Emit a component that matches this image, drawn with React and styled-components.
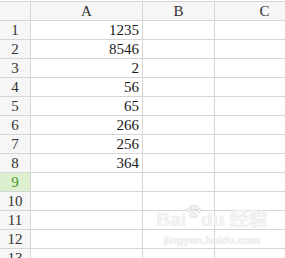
import styled, { createGlobalStyle } from 'styled-components'

const GlobalStyle = createGlobalStyle`
    html, body {
        margin: 0;
        padding: 0;
        background: #fff;
    }
    body {
        font-family: "Liberation Serif", "Noto Sans CJK SC", serif;
        overflow: hidden;
    }
`

const rows = [1235, 8546, 2, 56, 65, 266, 256, 364, null, null, null, null, null]
const columns = ['A', 'B', 'C']

const Sheet = styled.div`
    position: relative;
    width: 285px;
    height: 258px;
    overflow: hidden;
    padding-top: 1px;
    box-sizing: border-box;
`

const Grid = styled.div`
    display: grid;
    grid-template-columns: 31px 112px 72px 100px;
    grid-auto-rows: 19px;
    grid-template-rows: 20px;
`

const Cell = styled.div`
    box-sizing: border-box;
    border-right: 1px solid #d5d5d5;
    border-bottom: 1px solid #d5d5d5;
    font-size: 15px;
    line-height: 18px;
    color: #1a1a1a;
    padding: 0 3px 0 0;
    text-align: right;
    white-space: nowrap;
`

const HeadCell = styled(Cell)`
    border-top: 1px solid #d5d5d5;
    background: #f6f6f6;
    text-align: center;
    padding: 0;
    color: #333;
`

const RowHead = styled(Cell)`
    background: ${p => (p.$active ? '#dcefcf' : '#f6f6f6')};
    color: ${p => (p.$active ? '#3f9a1e' : '#333')};
    text-align: center;
    padding: 0;
`

const Watermark = styled.div`
    position: absolute;
    left: 163px;
    top: 204px;
    width: 98px;
    display: flex;
    flex-direction: column;
    align-items: center;
    color: #f2f2f2;
    font-family: "Liberation Sans", "Noto Sans CJK SC", sans-serif;
    font-weight: bold;
    white-space: nowrap;
    text-shadow: 0 0 1px #d8d8d8;
    pointer-events: none;
`

const Brand = styled.div`
    display: flex;
    align-items: flex-end;
    font-size: 19px;
    line-height: 22px;
`

const Site = styled.div`
    font-size: 11px;
    line-height: 12px;
    margin-top: 3px;
`

function Paw() {
    return (
        <svg width="15" height="27" viewBox="0 0 14 24" fill="#f2f2f2" stroke="#d8d8d8" strokeWidth="0.7">
            <ellipse cx="3" cy="5" rx="1.8" ry="2.2" />
            <ellipse cx="6" cy="2.6" rx="1.8" ry="2.2" />
            <ellipse cx="9.5" cy="2.6" rx="1.8" ry="2.2" />
            <ellipse cx="12" cy="5.5" rx="1.6" ry="2" />
            <path d="M3.5 10.5c0-2 1.8-3.2 3.5-3.2s3.5 1.2 3.5 3.2c0 1.2-1.6 1.6-3.5 1.2-1.9.4-3.5 0-3.5-1.2z" />
        </svg>
    )
}

export default function App() {
    return (
        <>
            <GlobalStyle />
            <Sheet>
                <Grid>
                    <HeadCell />
                    {columns.map(c => (
                        <HeadCell key={c}>{c}</HeadCell>
                    ))}
                    {rows.map((value, i) => (
                        <Row key={i} index={i + 1} value={value} />
                    ))}
                </Grid>
                <Watermark>
                    <Brand>
                        <span>Bai</span>
                        <Paw />
                        <span>du 经验</span>
                    </Brand>
                    <Site>jingyan.baidu.com</Site>
                </Watermark>
            </Sheet>
        </>
    )
}

function Row({ index, value }) {
    return (
        <>
            <RowHead $active={index === 9}>{index}</RowHead>
            <Cell>{value ?? ''}</Cell>
            <Cell />
            <Cell />
        </>
    )
}
